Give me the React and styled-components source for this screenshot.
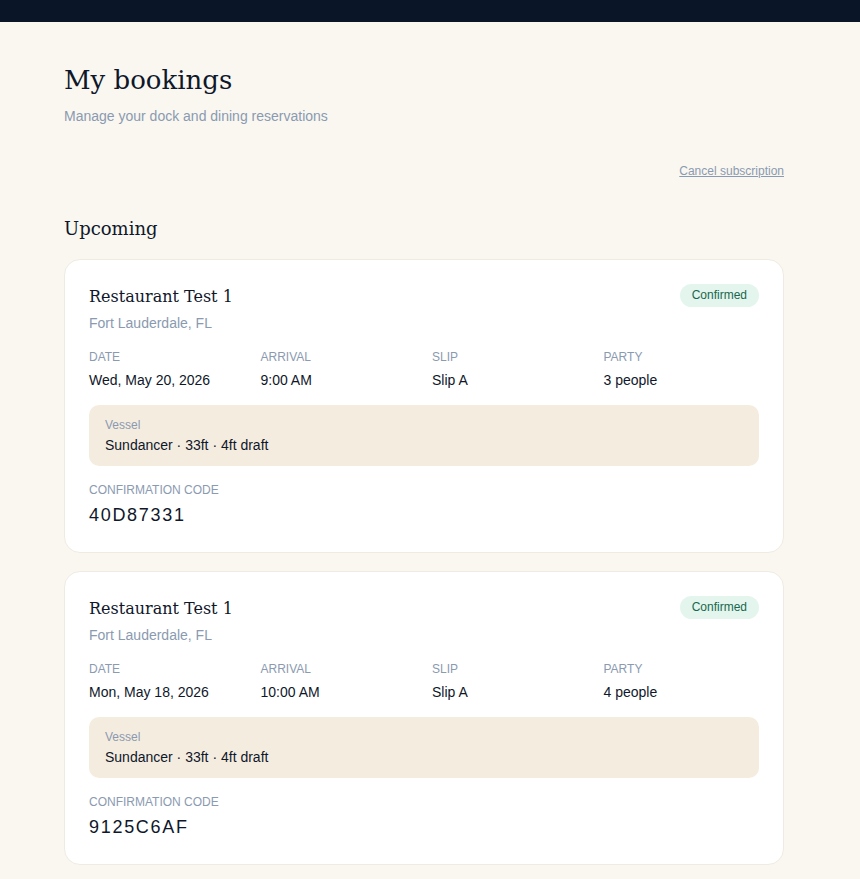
import React from 'react';
import styled, { createGlobalStyle } from 'styled-components';

const GlobalStyle = createGlobalStyle`
  body {
    margin: 0;
    background: #faf7f1;
    font-family: "Liberation Sans", Arial, sans-serif;
    color: #0f172a;
  }
`;

const TopBar = styled.div`
  height: 22px;
  background: #0b1528;
`;

const Page = styled.main`
  width: 720px;
  margin: 0 0 0 64px;
  padding: 40px 0 32px;
`;

const Title = styled.h1`
  margin: 0;
  font-family: "DejaVu Serif", Georgia, serif;
  font-weight: 400;
  font-size: 26px;
  line-height: 36px;
  color: #0f172a;
`;

const Subtitle = styled.p`
  margin: 8px 0 0;
  font-size: 14px;
  line-height: 20px;
  color: #8a9ab0;
`;

const Actions = styled.div`
  display: flex;
  justify-content: flex-end;
  margin-top: 37px;
`;

const TextLink = styled.a`
  font-size: 12px;
  line-height: 16px;
  color: #8a9ab0;
  text-decoration: underline;
  cursor: pointer;
`;

const SectionTitle = styled.h2`
  margin: 36px 0 16px;
  font-family: "DejaVu Serif", Georgia, serif;
  font-weight: 400;
  font-size: 18px;
  line-height: 28px;
  color: #0f172a;
`;

const List = styled.div`
  display: flex;
  flex-direction: column;
  gap: 18px;
`;

const Card = styled.article`
  background: #fff;
  border: 1px solid #f0ebe2;
  border-radius: 16px;
  padding: 24px;
`;

const CardHead = styled.div`
  display: flex;
  justify-content: space-between;
  align-items: flex-start;
`;

const Venue = styled.h3`
  margin: 0;
  font-family: "DejaVu Serif", Georgia, serif;
  font-weight: 400;
  font-size: 16px;
  line-height: 26px;
  color: #0f172a;
`;

const Badge = styled.span`
  display: inline-block;
  padding: 4px 12px;
  border-radius: 999px;
  background: #e4f5ed;
  color: #17684f;
  font-size: 12px;
  line-height: 15px;
`;

const Location = styled.div`
  margin-top: 3px;
  font-size: 14px;
  line-height: 20px;
  color: #8a9ab0;
`;

const Details = styled.div`
  display: grid;
  grid-template-columns: repeat(4, 1fr);
  gap: 16px;
  margin-top: 16px;
`;

const Label = styled.div`
  font-size: 12px;
  line-height: 16px;
  color: #8a9ab0;
  text-transform: ${p => (p.$upper ? 'uppercase' : 'none')};
`;

const Value = styled.div`
  margin-top: ${p => p.$gap || 5}px;
  font-size: 14px;
  line-height: 20px;
  color: #0f172a;
`;

const Vessel = styled.div`
  margin-top: 15px;
  background: #f5ece0;
  border-radius: 10px;
  padding: 12px 16px 11px;
`;

const CodeBlock = styled.div`
  margin-top: 16px;
`;

const Code = styled.div`
  margin-top: 4px;
  font-size: 18px;
  line-height: 26px;
  letter-spacing: 1.7px;
  color: #0f172a;
`;

const bookings = [
  { date: 'Wed, May 20, 2026', arrival: '9:00 AM', slip: 'Slip A', party: '3 people', code: '40D87331' },
  { date: 'Mon, May 18, 2026', arrival: '10:00 AM', slip: 'Slip A', party: '4 people', code: '9125C6AF' },
];

const BookingCard = ({ b }) => (
  <Card>
    <CardHead>
      <Venue>Restaurant Test 1</Venue>
      <Badge>Confirmed</Badge>
    </CardHead>
    <Location>Fort Lauderdale, FL</Location>
    <Details>
      <div>
        <Label $upper>Date</Label>
        <Value>{b.date}</Value>
      </div>
      <div>
        <Label $upper>Arrival</Label>
        <Value>{b.arrival}</Value>
      </div>
      <div>
        <Label $upper>Slip</Label>
        <Value>{b.slip}</Value>
      </div>
      <div>
        <Label $upper>Party</Label>
        <Value>{b.party}</Value>
      </div>
    </Details>
    <Vessel>
      <Label>Vessel</Label>
      <Value $gap={2}>Sundancer · 33ft · 4ft draft</Value>
    </Vessel>
    <CodeBlock>
      <Label $upper>Confirmation code</Label>
      <Code>{b.code}</Code>
    </CodeBlock>
  </Card>
);

export default function App() {
  return (
    <>
      <GlobalStyle />
      <TopBar />
      <Page>
        <Title>My bookings</Title>
        <Subtitle>Manage your dock and dining reservations</Subtitle>
        <Actions>
          <TextLink>Cancel subscription</TextLink>
        </Actions>
        <SectionTitle>Upcoming</SectionTitle>
        <List>
          {bookings.map(b => (
            <BookingCard key={b.code} b={b} />
          ))}
        </List>
      </Page>
    </>
  );
}
